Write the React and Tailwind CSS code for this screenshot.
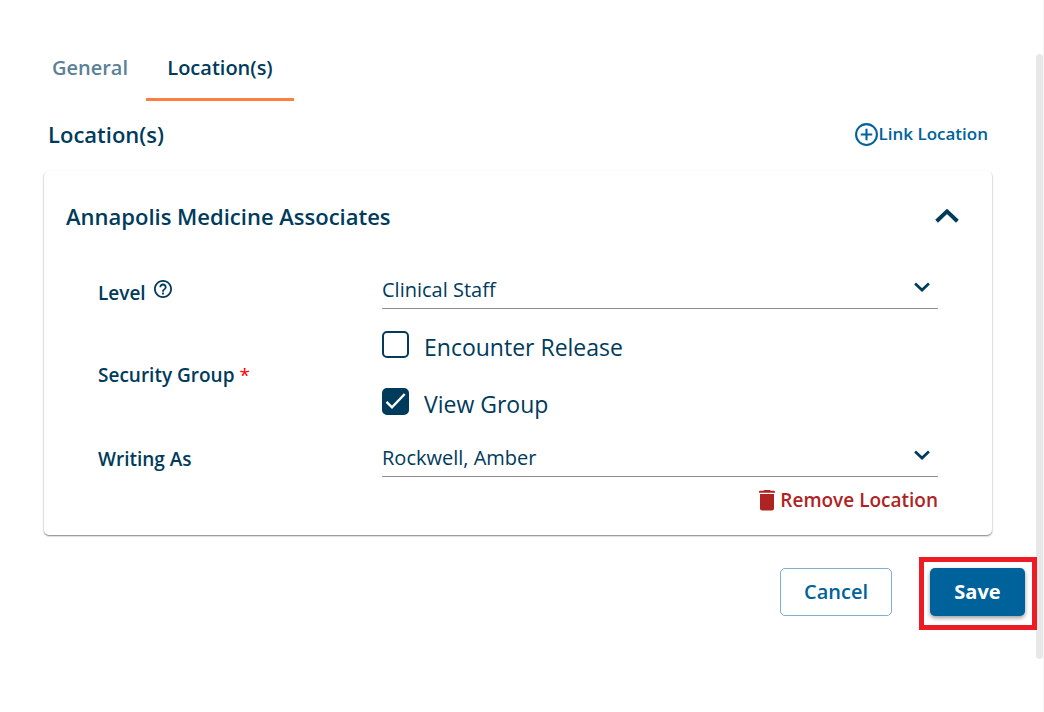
import { useState } from "react";

function Chevron({ className, up = false, strokeWidth = 3 }) {
  return (
    <svg className={className} viewBox="0 0 24 14" fill="none" stroke="currentColor" strokeWidth={strokeWidth} aria-hidden="true">
      <path d={up ? "M1.600 12.200 12 2.400l10.400 9.800" : "M1.600 1.800 12 11.600 22.400 1.800"} />
    </svg>
  );
}

function SelectField({ id, value }) {
  return (
    <div className="relative">
      <select
        id={id}
        className="block h-[39px] w-full appearance-none border-b border-[#8c8c8c] bg-transparent pt-[2px] text-xl text-[#003b5c] outline-none"
      >
        <option>{value}</option>
      </select>
      <Chevron className="pointer-events-none absolute top-3 right-2 h-[10px] w-4" strokeWidth={4} />
    </div>
  );
}

function CheckOption({ id, label, initial }) {
  const [checked, setChecked] = useState(initial);
  return (
    <div className="flex h-[27px] items-start gap-[15px]">
      <span className="relative block h-[27px] w-[27px]">
        <input
          id={id}
          type="checkbox"
          checked={checked}
          onChange={(e) => setChecked(e.target.checked)}
          className="block h-[27px] w-[27px] appearance-none rounded-[5px] border-[2px] border-[#003b5c] checked:bg-[#003b5c]"
        />
        {checked && (
          <svg className="pointer-events-none absolute inset-0 h-full w-full" viewBox="0 0 27 27" fill="none" stroke="#fff" strokeWidth="2.400" aria-hidden="true">
            <path d="M4.500 13.800 10 19.300 22.700 6" />
          </svg>
        )}
      </span>
      <label htmlFor={id} className="pt-[3px] text-[23px] leading-[26px]">
        {label}
      </label>
    </div>
  );
}

export default function App() {
  return (
    <div className="flex min-h-screen items-start border-r border-[#f4f4f4] bg-white font-['Open_Sans',sans-serif] text-[#003b5c]">
      <main className="min-w-0 flex-1 pt-[37px]">
        <nav className="flex pl-[34px]">
          <button type="button" className="h-16 w-28 border-b-3 border-transparent text-xl font-semibold text-[#5b8199]">
            General
          </button>
          <button type="button" className="h-16 w-[148px] border-b-3 border-[#ff7f41] text-xl font-semibold">
            Location(s)
          </button>
        </nav>

        <section className="px-11">
          <div className="flex h-[70px] items-center justify-between px-1 pb-1">
            <h1 className="text-[22px] font-semibold">Location(s)</h1>
            <button type="button" className="flex items-center text-[17px] font-semibold text-[#00629b]">
              <svg className="h-[25px] w-[25px]" viewBox="0 0 24 24" fill="none" stroke="currentColor" strokeWidth="2" aria-hidden="true">
                <circle cx="12" cy="12" r="10" />
                <path d="M12 6.500v11M6.500 12h11" />
              </svg>
              Link Location
            </button>
          </div>

          <article className="rounded-[5px] bg-white pb-[21px] shadow-[0_1px_2px_rgba(0,0,0,0.4),0_1px_1px_rgba(0,0,0,0.15)]">
            <header className="flex h-[90px] items-center justify-between pr-[33px] pl-[22px]">
              <h2 className="text-[22px] font-semibold">Annapolis Medicine Associates</h2>
              <button type="button" aria-label="Collapse location">
                <Chevron up className="h-[14px] w-6" strokeWidth={4} />
              </button>
            </header>

            <div className="grid grid-cols-[284px_1fr] px-[54px]">
              <div className="flex h-[70px] items-start gap-2 pt-4">
                <label htmlFor="level" className="pt-[2px] text-[19px] font-semibold">Level</label>
                <svg className="mt-[3px] h-[18px] w-[18px]" viewBox="2 2 20 20" fill="currentColor" aria-hidden="true">
                  <path d="M11 18h2v-2h-2v2zm1-16C6.480 2 2 6.480 2 12s4.480 10 10 10 10-4.480 10-10S17.520 2 12 2zm0 18c-4.410 0-8-3.590-8-8s3.590-8 8-8 8 3.590 8 8-3.590 8-8 8zm0-14c-2.210 0-4 1.790-4 4h2c0-1.100.9-2 2-2s2 .9 2 2c0 2-3 1.750-3 5h2c0-2.250 3-2.500 3-5 0-2.210-1.790-4-4-4z" />
                </svg>
              </div>
              <div className="pt-[9px]">
                <SelectField id="level" value="Clinical Staff" />
              </div>

              <div id="security-group" className="pt-[30px] text-[19px] font-semibold">
                Security Group <span className="font-normal text-[#f00]">*</span>
              </div>
              <div role="group" aria-labelledby="security-group" className="flex flex-col gap-[30px] pb-[23px]">
                <CheckOption id="encounter-release" label="Encounter Release" initial={false} />
                <CheckOption id="view-group" label="View Group" initial={true} />
              </div>

              <label htmlFor="writing-as" className="pt-[7px] text-[19px] font-semibold">Writing As</label>
              <SelectField id="writing-as" value="Rockwell, Amber" />
            </div>

            <div className="flex justify-end px-[54px] pt-[9px]">
              <button type="button" className="flex h-7 items-center gap-1 text-[19px] font-semibold text-[#b02323]">
                <svg className="h-[22px] w-[18px]" viewBox="0 0 18 22" fill="currentColor" aria-hidden="true">
                  <path d="M6.500 1h5a1.500 1.500 0 0 1 1.200.7H16a1 1 0 0 1 1 1v1H1v-1a1 1 0 0 1 1-1h3.300A1.500 1.500 0 0 1 6.500 1zM2 5h14v14.500a2 2 0 0 1-2 2H4a2 2 0 0 1-2-2z" />
                </svg>
                Remove Location
              </button>
            </div>
          </article>
        </section>

        <footer className="flex justify-end gap-[38px] pt-[33px] pr-[11px]">
          <button type="button" className="h-12 w-28 rounded-[5px] border border-[#7fb0cd] text-xl font-semibold text-[#00629b]">
            Cancel
          </button>
          <div className="relative">
            <button type="button" className="h-12 w-[95px] rounded-[5px] bg-[#00629b] text-xl font-bold text-white shadow-[0_2px_4px_rgba(0,0,0,0.4)]">
              Save
            </button>
            <div className="pointer-events-none absolute -top-[11px] -right-3 -bottom-[14px] -left-[11px] border-5 border-[#ed1c24]" />
          </div>
        </footer>
      </main>
      <div className="mt-[54px] h-[605px] w-[7px] rounded-full bg-[#e8e8e8]" />
    </div>
  );
}
